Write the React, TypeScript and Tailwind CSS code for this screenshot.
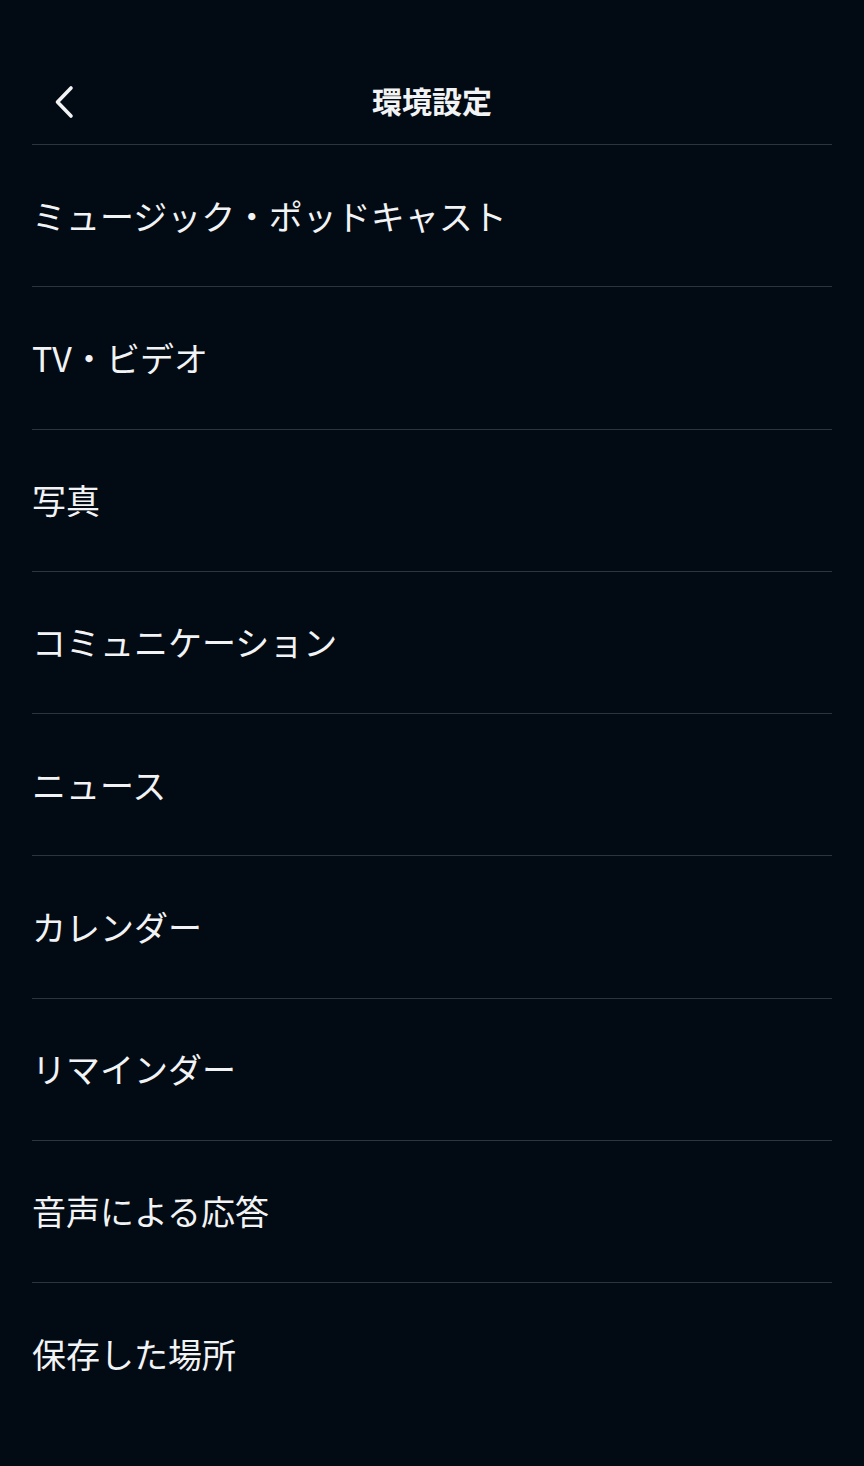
import React from 'react';

const items = [
  'ミュージック・ポッドキャスト',
  'TV・ビデオ',
  '写真',
  'コミュニケーション',
  'ニュース',
  'カレンダー',
  'リマインダー',
  '音声による応答',
  '保存した場所',
];

const App = () => {
  return (
    <div
      className="min-h-screen bg-[#020a13] text-[#f2f3f4]"
      style={{ fontFamily: '"Noto Sans CJK JP", "Noto Sans", sans-serif' }}
    >
      <div className="px-[32px]">
        {/* Header */}
        <div className="relative h-[145px] flex items-center justify-center border-b border-[#2e343c]">
          <button className="absolute left-[14px] top-[84px] w-[36px] h-[36px] flex items-center justify-center">
            <svg width="26" height="36" viewBox="0 0 26 36" fill="none">
              <path
                d="M20 4 L6.5 18 L20 32"
                stroke="#f2f3f4"
                strokeWidth="3.6"
                strokeLinecap="round"
                strokeLinejoin="round"
              />
            </svg>
          </button>
          <h1 className="text-[30px] font-bold mt-[56px] leading-none">環境設定</h1>
        </div>

        {/* List */}
        {items.map((label, i) => (
          <div
            key={label}
            className={`h-[142.25px] flex items-center ${
              i < items.length - 1 ? 'border-b border-[#2e343c]' : ''
            }`}
          >
            <span className="text-[34px] leading-none">{label}</span>
          </div>
        ))}
      </div>
    </div>
  );
};

export default App;
